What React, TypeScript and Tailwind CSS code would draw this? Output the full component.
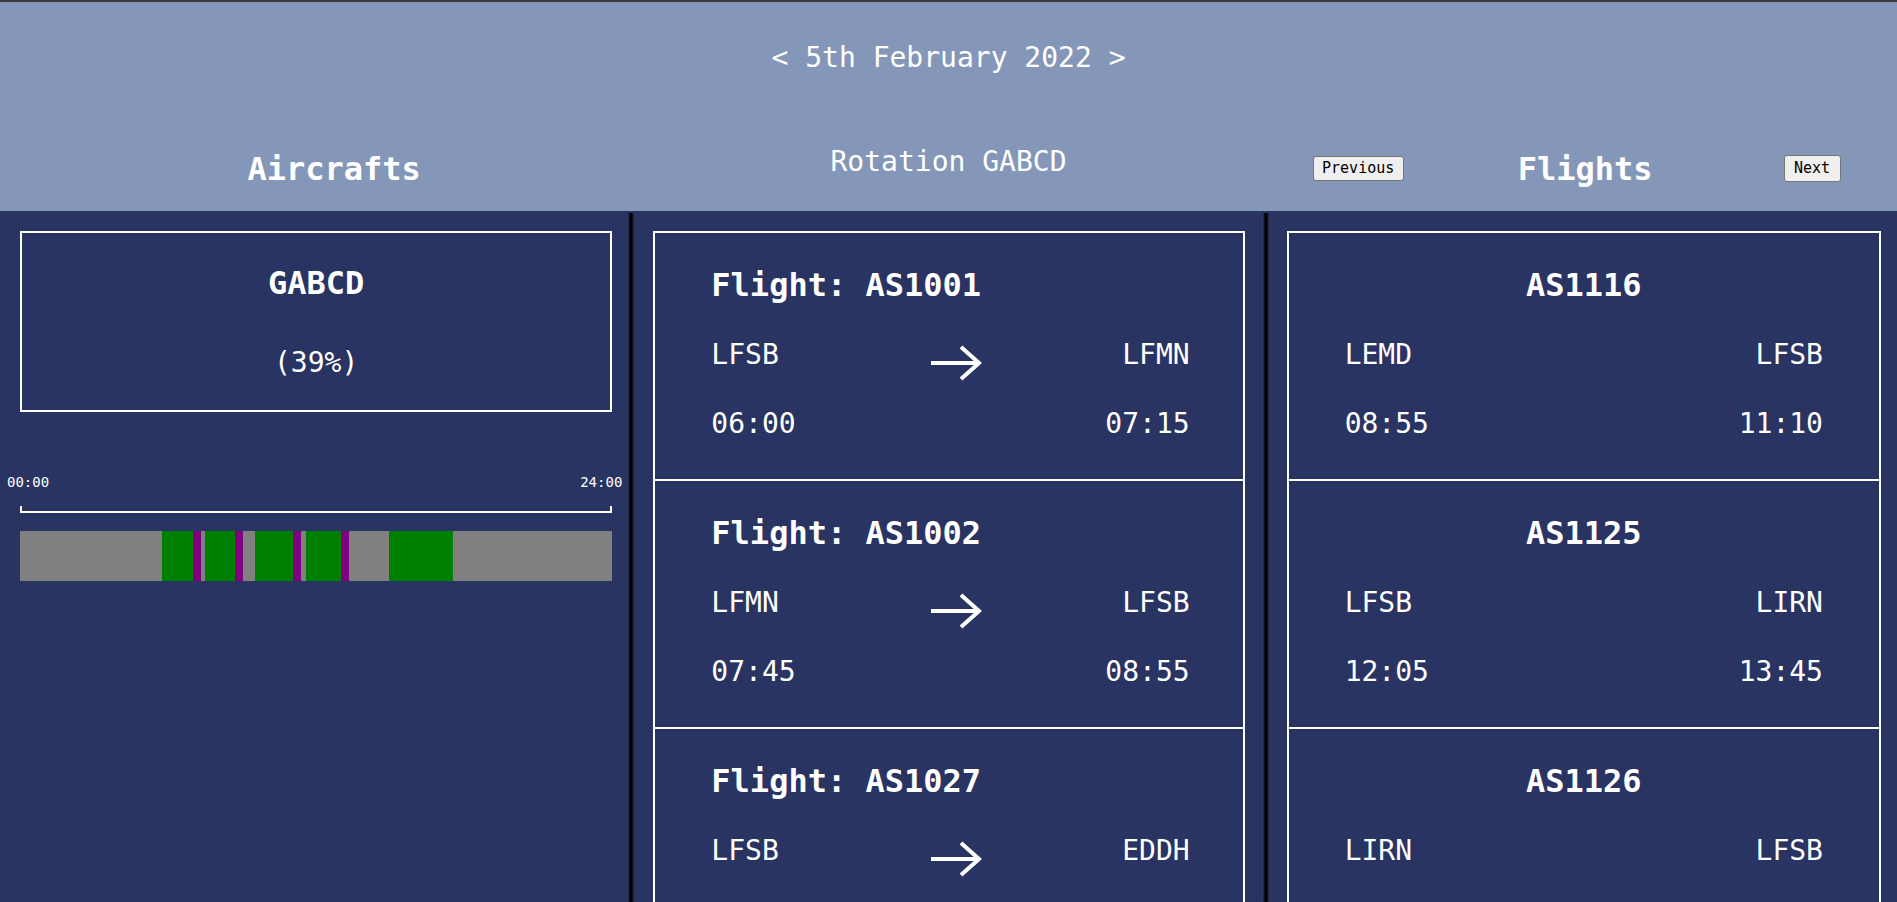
import React from "react";

type MidFlight = { id: string; from: string; to: string; dep: string; arr: string };

const rotation: MidFlight[] = [
  { id: "AS1001", from: "LFSB", to: "LFMN", dep: "06:00", arr: "07:15" },
  { id: "AS1002", from: "LFMN", to: "LFSB", dep: "07:45", arr: "08:55" },
  { id: "AS1027", from: "LFSB", to: "EDDH", dep: "09:30", arr: "11:05" },
];

const flights: MidFlight[] = [
  { id: "AS1116", from: "LEMD", to: "LFSB", dep: "08:55", arr: "11:10" },
  { id: "AS1125", from: "LFSB", to: "LIRN", dep: "12:05", arr: "13:45" },
  { id: "AS1126", from: "LIRN", to: "LFSB", dep: "14:20", arr: "16:00" },
];

const segments: { x: number; w: number; c: string }[] = [
  { x: 141.8, w: 31, c: "#008000" },
  { x: 172.8, w: 8.2, c: "#800080" },
  { x: 185, w: 29.9, c: "#008000" },
  { x: 214.9, w: 8.1, c: "#800080" },
  { x: 234.9, w: 38.3, c: "#008000" },
  { x: 273.2, w: 7.8, c: "#800080" },
  { x: 285.5, w: 35.5, c: "#008000" },
  { x: 321, w: 8.2, c: "#800080" },
  { x: 369, w: 63.8, c: "#008000" },
];

function Arrow() {
  return (
    <svg
      className="ml-[12px] mt-[7px] block shrink-0"
      width="54"
      height="38"
      viewBox="0 0 54 38"
      fill="none"
      stroke="white"
      strokeWidth="4"
      strokeLinecap="butt"
      strokeLinejoin="miter"
    >
      <line x1="2" y1="19" x2="50" y2="19" />
      <polyline points="32,3 50,19 32,35" />
    </svg>
  );
}

function Divider() {
  return (
    <div className="mt-[2px] w-[6px] shrink-0 bg-[linear-gradient(to_right,rgba(0,0,0,0),#000_35%,#000_65%,rgba(0,0,0,0))]" />
  );
}

export default function App() {
  return (
    <div className="h-[902px] w-full overflow-hidden bg-[#293462] font-['DejaVu_Sans_Mono',monospace] text-white">
      <div className="h-[2px] bg-[#3c3c3c]" />
      <header className="h-[209px] bg-[#8597b8]">
        <div className="pt-[38px] text-center text-[28px] leading-[36px]">{"< 5th February 2022 >"}</div>
        <div className="mt-[68px] flex items-start">
          <div className="min-w-0 flex-1">
            <div className="pl-[40px] pt-[5px] text-center text-[32px] font-bold leading-[40px]">Aircrafts</div>
          </div>
          <div className="w-[6px] shrink-0" />
          <div className="min-w-0 flex-1">
            <div className="text-center text-[28px] leading-[36px]">Rotation GABCD</div>
          </div>
          <div className="w-[6px] shrink-0" />
          <div className="min-w-0 flex-1">
            <div className="flex items-start pl-[44px]">
              <button className="mt-[12px] flex h-[25px] w-[91px] items-center justify-center rounded-[3px] border border-[#767676] bg-[#efefef] text-[15px] leading-none text-black">
                Previous
              </button>
              <div className="ml-[114px] pt-[5px] text-[32px] font-bold leading-[40px]">Flights</div>
              <button className="ml-[131px] mt-[11px] flex h-[27px] w-[57px] items-center justify-center rounded-[3px] border border-[#767676] bg-[#efefef] text-[15px] leading-none text-black">
                Next
              </button>
            </div>
          </div>
        </div>
      </header>
      <main className="flex h-[691px]">
        <section className="min-w-0 flex-1">
          <div className="pl-5 pr-4 pt-5">
            <div className="border-2 border-white pb-[29px] pt-[30px] text-center">
              <div className="text-[32px] font-bold leading-[40px]">GABCD</div>
              <div className="mt-[42px] text-[28px] leading-[36px]">(39%)</div>
            </div>
            <div className="-ml-[13px] -mr-[10px] mt-[60px] flex justify-between text-[14px] leading-[20px]">
              <span>00:00</span>
              <span>24:00</span>
            </div>
            <div className="mt-[14px] h-[7px] border-x-2 border-b-2 border-white" />
            <svg className="mt-[18px] block h-[50px] w-full" viewBox="0 0 592 50" preserveAspectRatio="none" shapeRendering="crispEdges">
              <rect x="0" y="0" width="592" height="50" fill="#808080" />
              {segments.map((s, i) => (
                <rect key={i} x={s.x} y="0" width={s.w} height="50" fill={s.c} />
              ))}
            </svg>
          </div>
        </section>
        <Divider />
        <section className="min-w-0 flex-1">
          <div className="pl-[19px] pr-[18px] pt-5">
            {rotation.map((f, i) => (
              <div
                key={f.id}
                className={i === 0 ? "border-2 border-white pb-[37px] pl-14 pr-[53px] pt-[32px]" : "border-2 border-t-0 border-white pb-[37px] pl-14 pr-[53px] pt-[32px]"}
              >
                <div className="text-[32px] font-bold leading-[40px]">Flight: {f.id}</div>
                <div className="mt-[32px] flex h-[36px] items-start justify-between text-[28px] leading-[36px]">
                  <span>{f.from}</span>
                  <Arrow />
                  <span>{f.to}</span>
                </div>
                <div className="mt-[33px] flex justify-between text-[28px] leading-[36px]">
                  <span>{f.dep}</span>
                  <span>{f.arr}</span>
                </div>
              </div>
            ))}
          </div>
        </section>
        <Divider />
        <section className="min-w-0 flex-1">
          <div className="pl-[18px] pr-[16px] pt-5">
            {flights.map((f, i) => (
              <div
                key={f.id}
                className={i === 0 ? "border-2 border-white px-14 pb-[37px] pt-[32px]" : "border-2 border-t-0 border-white px-14 pb-[37px] pt-[32px]"}
              >
                <div className="text-center text-[32px] font-bold leading-[40px]">{f.id}</div>
                <div className="mt-[32px] flex h-[36px] justify-between text-[28px] leading-[36px]">
                  <span>{f.from}</span>
                  <span>{f.to}</span>
                </div>
                <div className="mt-[33px] flex justify-between text-[28px] leading-[36px]">
                  <span>{f.dep}</span>
                  <span>{f.arr}</span>
                </div>
              </div>
            ))}
          </div>
        </section>
      </main>
    </div>
  );
}
